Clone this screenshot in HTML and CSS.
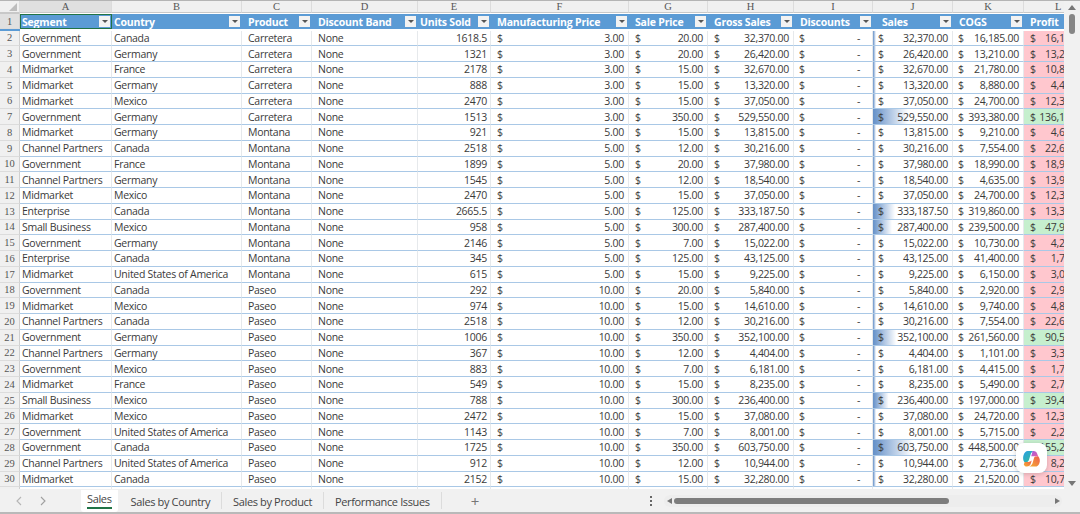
FILE: index.html
```html
<!DOCTYPE html>
<html lang="en">
<head>
    <meta charset="UTF-8">
    <meta name="viewport" content="width=device-width, initial-scale=1.0">
    <title>Sales</title>
    <link rel="stylesheet" href="styles.css">
</head>
<body>
    <div class="window">
        <div class="main">
            <div class="sheet" id="sheet"></div>
            <div class="vscroll">
                <span class="tri tri-up"></span>
                <span class="vthumb"></span>
                <span class="tri tri-down"></span>
            </div>
        </div>
        <div class="tabbar">
            <div class="tab-nav">
                <svg width="8" height="10" viewBox="0 0 8 10"><path d="M6 1 2 5l4 4" fill="none" stroke="#b5b5b5" stroke-width="1.1"/></svg>
                <svg width="8" height="10" viewBox="0 0 8 10"><path d="M2 1l4 4-4 4" fill="none" stroke="#a0a0a0" stroke-width="1.1"/></svg>
            </div>
            <div class="tabs">
                <div class="tab active">Sales</div>
                <div class="tab">Sales by Country</div>
                <div class="tab">Sales by Product</div>
                <div class="tab">Performance Issues</div>
            </div>
            <div class="add-tab">+</div>
            <div class="dots"><i></i><i></i><i></i></div>
            <div class="hscroll">
                <span class="tri tri-left"></span>
                <span class="hthumb"></span>
                <span class="tri tri-right"></span>
            </div>
        </div>
        <div class="copilot">
            <svg width="19" height="19" viewBox="0 0 20 20">
                <defs>
                    <linearGradient id="cpA" x1="0" y1="0" x2="1" y2="1"><stop offset="0" stop-color="#2a9de8"/><stop offset="1" stop-color="#33c08f"/></linearGradient>
                    <linearGradient id="cpB" x1="0" y1="0" x2="1" y2="1"><stop offset="0" stop-color="#a05be0"/><stop offset="1" stop-color="#ee5fa0"/></linearGradient>
                    <linearGradient id="cpC" x1="0" y1="1" x2="1" y2="0"><stop offset="0" stop-color="#f5b02e"/><stop offset="1" stop-color="#ee5a50"/></linearGradient>
                </defs>
                <path d="M6 2h6.5c-2 .6-3 2-3.600 4.200L7.500 11c-.6 2-2 3-4 3H2.600C1 12 .8 9 1.600 6.600 2.400 3.800 4 2 6 2z" fill="url(#cpA)"/>
                <path d="M11 2.200c2.500-.5 4.500.8 5.200 3.300l1.200 3.500c-.8-1-2-1.500-3.500-1.500h-4.200l.9-3c.2-1 .3-1.800.4-2.300z" fill="url(#cpB)"/>
                <path d="M13.800 7.800h3.400c1.700 2 2 4.800 1.100 7.200-.8 2.400-2.400 3.500-4.300 3.500H7.500c2-.6 3.200-2 3.800-4.200l1.200-4.300c.2-1 .6-1.800 1.300-2.200z" fill="url(#cpC)"/>
                <path d="M2.800 13.600h3.900c1.400 0 2.600-.5 3.500-1.500l-.9 3.200c-.6 2-2 3.200-4.100 3.200-1.400 0-2.500-.5-3.300-2.200z" fill="url(#cpC)"/>
            </svg>
        </div>
    </div>
    <script src="script.js"></script>
</body>
</html>
```

FILE: styles.css
```css
* {
    margin: 0;
    padding: 0;
    box-sizing: border-box;
}
html, body {
    height: 100%;
    overflow: hidden;
}
body {
    background-color: #fff;
    font-family: "Open Sans", Arial, sans-serif;
    font-size: 10.5px;
    letter-spacing: -0.28px;
    color: #3a3a3a;
}
.window {
    position: relative;
    height: 514px;
    display: flex;
    flex-direction: column;
    border-top: 1px solid #b4b4b4;
    border-bottom: 2px solid #b9b9b9;
}
.main {
    display: flex;
    height: 488px;
}
.sheet {
    width: 1064px;
    overflow: hidden;
}
.row {
    display: grid;
    grid-template-columns: 20px 92px 130px 70px 106px 73px 138px 79px 86px 79px 80px 71px 71px;
    height: 15.75px;
}
.cell {
    display: flex;
    align-items: center;
    justify-content: space-between;
    padding: 0 2px;
    white-space: nowrap;
    overflow: hidden;
    border-right: 1px solid #e6e9ec;
    border-bottom: 1px solid #a9c8e6;
}
.cell.inset {
    padding-left: 6px;
}
.num {
    justify-content: flex-end;
    padding-right: 3px;
}
.acc {
    padding: 0 4px 0 6px;
}
.acc.near {
    padding-left: 5px;
}
.dash {
    padding-right: 12px;
}

/* letters row and row numbers */
.letters {
    height: 13px;
}
.letters .cell {
    justify-content: center;
    background-color: #f0f0f0;
    border-right: 1px solid #dcdcdc;
    border-bottom: 1px solid #c8c8c8;
    font-family: "Liberation Serif", serif;
    font-size: 10.5px;
    letter-spacing: 0;
    color: #555;
}
.letters .cell.on {
    background-color: #e0e0e0;
}
.letters .corner {
    position: relative;
}
.letters .corner::after {
    content: "";
    position: absolute;
    right: 2px;
    bottom: 1px;
    border-style: solid;
    border-width: 0 0 8px 8px;
    border-color: transparent transparent #bdbdbd transparent;
}
.letters .last {
    justify-content: flex-start;
    padding-left: 31px;
}
.rownum {
    justify-content: center;
    background-color: #f0f0f0;
    border-right: 1px solid #d0d0d0;
    border-bottom: 1px solid #dcdcdc;
    font-family: "Liberation Serif", serif;
    font-size: 10.5px;
    letter-spacing: 0;
    color: #555;
}
.rownum.on {
    background-color: #e0e0e0;
}

/* table header */
.head {
    height: 16.5px;
}
.head .th {
    background-color: #5b9bd5;
    border-right: none;
    border-bottom: none;
    color: #fff;
    font-weight: 700;
    letter-spacing: -0.2px;
    padding: 0 2px 0 6px;
}
.head .th.tight {
    padding-left: 2px;
}
.head .th.wide {
    padding-left: 9px;
}
.head .th.picked {
    outline: 1px solid #217346;
    outline-offset: -1px;
}
.filter {
    flex: none;
    display: flex;
    align-items: center;
    justify-content: center;
    width: 11px;
    height: 11px;
    background-color: #f2f2f2;
}
.filter::after {
    content: "";
    border-style: solid;
    border-width: 3px 3px 0 3px;
    border-color: #555 transparent transparent transparent;
}

/* conditional formatting */
.bar {
    background-repeat: no-repeat;
    background-image: linear-gradient(to right, #6490c8, #ffffff);
}
.loss {
    background-color: #ffc7ce;
}
.gain {
    background-color: #c6efce;
}

/* scrollbars */
.vscroll {
    width: 16px;
    display: flex;
    flex-direction: column;
    align-items: center;
    background-color: #f1f1f1;
    padding-top: 4px;
}
.vthumb {
    width: 6px;
    height: 20px;
    margin-top: 4px;
    border-radius: 3px;
    background-color: #868686;
}
.tri {
    width: 0;
    height: 0;
    border-style: solid;
}
.tri-up {
    border-width: 0 4px 5px 4px;
    border-color: transparent transparent #777 transparent;
}
.tri-down {
    margin-top: auto;
    margin-bottom: 3px;
    border-width: 5px 4px 0 4px;
    border-color: #777 transparent transparent transparent;
}
.tri-left {
    border-width: 3px 5px 3px 0;
    border-color: transparent #777 transparent transparent;
}
.tri-right {
    margin-left: auto;
    border-width: 3px 0 3px 5px;
    border-color: transparent transparent transparent #777;
}

/* tab bar */
.tabbar {
    flex: 1;
    display: flex;
    align-items: center;
    background-color: #f1f1f1;
}
.tab-nav {
    width: 81px;
    display: flex;
    gap: 16px;
    padding-left: 15px;
}
.tabs {
    display: flex;
    align-items: center;
    flex: none;
    width: 364px;
    height: 23px;
}
.tab {
    flex: none;
    padding: 3px 11px 0 10px;
    margin-right: 1px;
    font-size: 11px;
    letter-spacing: -0.36px;
    color: #444;
    white-space: nowrap;
    border-right: 1px solid #dcdcdc;
    line-height: 14px;
}
.tab.active {
    height: 22px;
    padding: 2px 6px 0 6px;
    margin-right: 3px;
    background-color: #fff;
    border-right: none;
    border-radius: 0 0 3px 3px;
    position: relative;
}
.tab.active::after {
    content: "";
    position: absolute;
    left: 6px;
    right: 6px;
    bottom: 3px;
    height: 2px;
    background-color: #217346;
}
.add-tab {
    width: 20px;
    margin-left: 20px;
    font-size: 15px;
    color: #777;
    text-align: center;
}
.dots {
    display: flex;
    flex-direction: column;
    gap: 2px;
    margin-left: 165px;
}
.dots i {
    width: 2px;
    height: 2px;
    background-color: #666;
}
.hscroll {
    display: flex;
    align-items: center;
    width: 398px;
    height: 12px;
    margin-left: 12px;
    padding: 0 2px 0 3px;
    border-radius: 6px;
    background-color: #ededed;
}
.hthumb {
    width: 275px;
    height: 6px;
    margin-left: 2px;
    border-radius: 3px;
    background-color: #7d7d7d;
}

/* floating button */
.copilot {
    position: absolute;
    left: 1016px;
    top: 442px;
    width: 31px;
    height: 30px;
    display: flex;
    align-items: center;
    justify-content: center;
    background-color: #fff;
    border-radius: 8px;
    box-shadow: 0 1px 5px rgba(0, 0, 0, 0.18);
}
```

FILE: script.js
```js
const letters = ['A', 'B', 'C', 'D', 'E', 'F', 'G', 'H', 'I', 'J', 'K', 'L'];
const headers = ['Segment', 'Country', 'Product', 'Discount Band', 'Units Sold', 'Manufacturing Price', 'Sale Price', 'Gross Sales', 'Discounts', 'Sales', 'COGS', 'Profit'];
const usa = 'United States of America';

// segment, country, product, units, manufacturing price, sale price, sales, cogs
const sales = [
    ['Government', 'Canada', 'Carretera', '1618.5', 3, 20, 32370, 16185],
    ['Government', 'Germany', 'Carretera', '1321', 3, 20, 26420, 13210],
    ['Midmarket', 'France', 'Carretera', '2178', 3, 15, 32670, 21780],
    ['Midmarket', 'Germany', 'Carretera', '888', 3, 15, 13320, 8880],
    ['Midmarket', 'Mexico', 'Carretera', '2470', 3, 15, 37050, 24700],
    ['Government', 'Germany', 'Carretera', '1513', 3, 350, 529550, 393380],
    ['Midmarket', 'Germany', 'Montana', '921', 5, 15, 13815, 9210],
    ['Channel Partners', 'Canada', 'Montana', '2518', 5, 12, 30216, 7554],
    ['Government', 'France', 'Montana', '1899', 5, 20, 37980, 18990],
    ['Channel Partners', 'Germany', 'Montana', '1545', 5, 12, 18540, 4635],
    ['Midmarket', 'Mexico', 'Montana', '2470', 5, 15, 37050, 24700],
    ['Enterprise', 'Canada', 'Montana', '2665.5', 5, 125, 333187.5, 319860],
    ['Small Business', 'Mexico', 'Montana', '958', 5, 300, 287400, 239500],
    ['Government', 'Germany', 'Montana', '2146', 5, 7, 15022, 10730],
    ['Enterprise', 'Canada', 'Montana', '345', 5, 125, 43125, 41400],
    ['Midmarket', usa, 'Montana', '615', 5, 15, 9225, 6150],
    ['Government', 'Canada', 'Paseo', '292', 10, 20, 5840, 2920],
    ['Midmarket', 'Mexico', 'Paseo', '974', 10, 15, 14610, 9740],
    ['Channel Partners', 'Canada', 'Paseo', '2518', 10, 12, 30216, 7554],
    ['Government', 'Germany', 'Paseo', '1006', 10, 350, 352100, 261560],
    ['Channel Partners', 'Germany', 'Paseo', '367', 10, 12, 4404, 1101],
    ['Government', 'Mexico', 'Paseo', '883', 10, 7, 6181, 4415],
    ['Midmarket', 'France', 'Paseo', '549', 10, 15, 8235, 5490],
    ['Small Business', 'Mexico', 'Paseo', '788', 10, 300, 236400, 197000],
    ['Midmarket', 'Mexico', 'Paseo', '2472', 10, 15, 37080, 24720],
    ['Government', usa, 'Paseo', '1143', 10, 7, 8001, 5715],
    ['Government', 'Canada', 'Paseo', '1725', 10, 350, 603750, 448500],
    ['Channel Partners', usa, 'Paseo', '912', 10, 12, 10944, 2736],
    ['Midmarket', 'Canada', 'Paseo', '2152', 10, 15, 32280, 21520]
];

const maxSales = 603750;

function money(value) {
    return value.toLocaleString('en-US', { minimumFractionDigits: 2, maximumFractionDigits: 2 });
}

function acc(value, extra = '', style = '') {
    return `<div class="cell acc ${extra}" ${style}><span>$</span><span>${money(value)}</span></div>`;
}

function barStyle(value) {
    const width = Math.max(3, value / maxSales * 40);
    return `style="background-size: ${width.toFixed(1)}px 100%"`;
}

let html = '<div class="row letters"><div class="cell corner"></div>';
letters.forEach((letter, i) => {
    const cls = (i === 0 ? 'on ' : '') + (i === 11 ? 'last' : '');
    html += `<div class="cell ${cls}">${letter}</div>`;
});
html += '<div class="cell"></div></div>';

html += '<div class="row head"><div class="cell rownum on">1</div>';
headers.forEach((header, i) => {
    let cls = i === 0 ? 'picked tight' : '';
    if (i === 1 || i === 4) cls = 'tight';
    if (i === 9) cls = 'wide';
    html += `<div class="cell th ${cls}"><span>${header}</span>${i === 11 ? '' : '<span class="filter"></span>'}</div>`;
});
html += '<div class="cell th"></div></div>';

sales.forEach((row, index) => {
    const [segment, country, product, units, mfg, price, total, cogs] = row;
    const profit = total - cogs;
    html += `<div class="row">
        <div class="cell rownum">${index + 2}</div>
        <div class="cell">${segment}</div>
        <div class="cell">${country}</div>
        <div class="cell inset">${product}</div>
        <div class="cell inset">None</div>
        <div class="cell num">${units}</div>
        ${acc(mfg)}${acc(price)}${acc(total)}
        <div class="cell acc near dash"><span>$</span><span>-</span></div>
        ${acc(total, 'near bar', barStyle(total))}${acc(cogs, 'near')}${acc(profit, profit > 30000 ? 'gain' : 'loss')}
    </div>`;
});

html += '<div class="row"><div class="cell rownum">31</div>' + '<div class="cell"></div>'.repeat(12) + '</div>';

document.getElementById('sheet').innerHTML = html;
```
